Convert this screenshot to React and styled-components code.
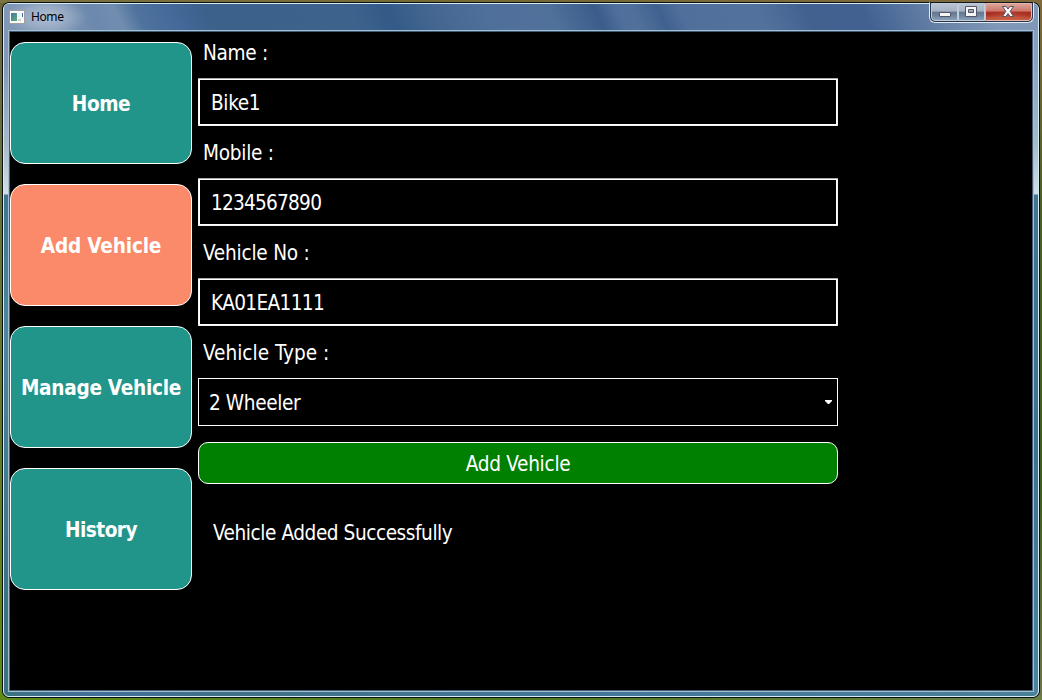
import React from 'react';
import styled, { createGlobalStyle } from 'styled-components';

const GlobalStyle = createGlobalStyle`
  *, *::before, *::after { box-sizing: border-box; }
  html, body { margin: 0; padding: 0; }
  body { overflow: hidden; font-family: "DejaVu Sans Condensed", "DejaVu Sans", sans-serif; font-stretch: condensed; }
  button, input { font: inherit; margin: 0; }
`;

const Desktop = styled.div`
  width: 1042px;
  height: 700px;
  padding: 2px;
  background:
    linear-gradient(90deg, #7c7340, #746a32 40%, #80693b) 0 0 / 100% 3px no-repeat,
    linear-gradient(180deg, #6d6439, #64733a 25%, #5f7b25 60%, #5d8b16) 0 0 / 3px 100% no-repeat,
    linear-gradient(90deg, #5d8b16, #4d7920 50%, #6b7f42) 0 100% / 100% 4px no-repeat,
    linear-gradient(180deg, #80693b, #4b5f24 30%, #3f5d1c 70%, #6f7548) 100% 0 / 4px 100% no-repeat,
    #4d6a22;
`;

const Window = styled.div`
  width: 1038px;
  height: 696px;
  border: 1px solid #0b1015;
  border-radius: 7px;
  background: #0b1015;
`;

const Glass = styled.div`
  height: 694px;
  display: flex;
  flex-direction: column;
  padding: 0 4px 4px;
  border: 1px solid #d5ebf3;
  border-radius: 6px;
  background:
    linear-gradient(180deg, #8095b4 0, #8298b8 60px, #a7bac9 140px, #d3dfe4 190px, #41758f 191px, #4c86a0 330px, #3b7182 600px, #3c7280 100%) 0 0 / 4px 100% no-repeat,
    linear-gradient(180deg, #8499b8 0, #8ba1bf 60px, #a7bac9 140px, #d3dfe4 190px, #41758f 191px, #3f718e 450px, #4d839d 100%) 100% 0 / 4px 100% no-repeat,
    linear-gradient(90deg, #3c7280, #426f9b 9%, #3e7186 22%, #43779a 60%, #4a7f98) 0 100% / 100% 4px no-repeat,
    #6384ac;
`;

const TitleBar = styled.header`
  height: 26px;
  flex: none;
  display: flex;
  align-items: flex-start;
  margin: 0 -4px;
  padding: 0 4px 0 5px;
  border-radius: 5px 5px 0 0;
  background:
    radial-gradient(ellipse 40px 20px at 43px 13px, #cbd6e2a0, #b7c5d670 55%, transparent),
    linear-gradient(65deg, #8197b8 0, #7e96b6 5%, #6c88ad 9%, #718daf 11.5%, #4f739d 13.5%, #44699a 17%, #3c618b 20%, #3c618b 24%, #3d628c 34%, #335a88 37.5%, #42658f 41%, #50709c 47%, #50719a 53%, #40608e 56.5%, #3b5d8b 57.5%, #516f9c 59.5%, #50709a 61%, #406190 63.5%, #516f9b 65.5%, #52729d 73%, #43618f 77.5%, #426192 83%, #6883a8 90%, #8197b8 95%, #8197b8 100%);
`;

const AppIcon = styled.svg`
  width: 16px;
  height: 14px;
  flex: none;
  margin-top: 6px;
`;

const WindowTitle = styled.span`
  margin: 5px 0 0 6px;
  color: #000;
  font-size: 12px;
  line-height: 16px;
  letter-spacing: -0.4px;
  font-family: "Noto Sans", sans-serif;
`;

const CaptionButtons = styled.div`
  display: flex;
  width: 105px;
  height: 21px;
  margin: -2px 0 0 auto;
  border: 1px solid #e1ebf2;
  border-top-color: #10161d;
  border-radius: 0 0 6px 6px;
  background: #27364b;
  padding: 0 1px 1px;
  overflow: hidden;
`;

const CaptionButton = styled.button`
  width: ${({ $width }) => $width}px;
  height: 18px;
  padding: 0;
  border: 1px solid ${({ $danger }) => ($danger ? '#eab5ab' : '#c0ccda')};
  border-radius: ${({ $corner }) => $corner || '0'};
  display: flex;
  align-items: center;
  justify-content: center;
  background: ${({ $danger }) =>
    $danger
      ? 'radial-gradient(ellipse 26px 9px at 50% 100%, #cc5b3e, transparent), linear-gradient(180deg, #dba398, #cc7568 45%, #a92d20 50%, #a83225 70%, #be6653)'
      : 'linear-gradient(180deg, #b9c4d1, #a5b2c3 45%, #64788f 50%, #6c819d 70%, #8ca0ba)'};
`;

const Client = styled.main`
  flex: 1;
  display: flex;
  gap: 6px;
  border: 1px solid #405c78;
  box-shadow: 0 0 0 1px #a6c1ce;
  margin: 1px;
  background: #000;
  color: #fff;
`;

const Sidebar = styled.nav`
  width: 182px;
  padding-top: 10px;
  display: flex;
  flex-direction: column;
  gap: 20px;
`;

const NavButton = styled.button`
  width: 182px;
  height: 122px;
  padding: 2px 0 0;
  border: 1px solid #fff;
  border-radius: 15px;
  background: ${({ $active }) => ($active ? '#fa8a69' : '#22958b')};
  color: #fff;
  font-size: 20.6px;
  font-weight: 700;
  letter-spacing: ${({ $spacing }) => $spacing}px;
  white-space: nowrap;
`;

const Form = styled.form`
  width: 640px;
  display: flex;
  flex-direction: column;
  font-size: 20.6px;
`;

const Label = styled.label`
  height: ${({ $first }) => ($first ? 46 : 52)}px;
  padding: ${({ $first }) => ($first ? 8 : 14)}px 0 0 5px;
  line-height: 26px;
  letter-spacing: ${({ $spacing }) => $spacing}px;
  white-space: nowrap;
`;

const TextInput = styled.input`
  width: 640px;
  height: 48px;
  padding: 2px 12px 0;
  border: 1px solid #f2f2f2;
  border-top-color: #a9abb0;
  border-radius: 1px;
  box-shadow: inset 0 0 0 1px #fff;
  outline: 0;
  background: #000;
  color: #fff;
  letter-spacing: ${({ $spacing }) => $spacing}px;
`;

const SelectBox = styled.div`
  height: 48px;
  display: flex;
  align-items: center;
  justify-content: space-between;
  padding: 0 5px 0 10px;
  border: 1px solid #fff;
  letter-spacing: ${({ $spacing }) => $spacing}px;
`;

const SelectValue = styled.span`
  padding-top: 2px;
`;

const SubmitButton = styled.button`
  height: 42px;
  margin-top: 16px;
  padding: 2px 0 0;
  border: 1px solid #fff;
  border-radius: 10px;
  background: #008000;
  color: #fff;
  letter-spacing: ${({ $spacing }) => $spacing}px;
`;

const Status = styled.p`
  margin: 36px 0 0 15px;
  line-height: 26px;
  letter-spacing: ${({ $spacing }) => $spacing}px;
  white-space: nowrap;
`;

const pages = [
  { name: 'Home', spacing: -0.45 },
  { name: 'Add Vehicle', spacing: -0.19, active: true },
  { name: 'Manage Vehicle', spacing: -0.28 },
  { name: 'History', spacing: -0.5 },
];

const fields = [
  { label: 'Name :', value: 'Bike1', labelSpacing: -0.32, valueSpacing: -0.35 },
  { label: 'Mobile :', value: '1234567890', labelSpacing: -0.26, valueSpacing: -0.77 },
  { label: 'Vehicle No :', value: 'KA01EA1111', labelSpacing: -0.23, valueSpacing: -0.65 },
];

export default function App() {
  return (
    <>
      <GlobalStyle />
      <Desktop>
        <Window>
          <Glass>
            <TitleBar>
              <AppIcon viewBox="0 0 16 14" shapeRendering="crispEdges">
                <defs>
                  <linearGradient id="screen" x1="0" y1="0" x2="1" y2="1">
                    <stop offset="0" stopColor="#4b78a4" />
                    <stop offset="1" stopColor="#58ad78" />
                  </linearGradient>
                </defs>
                <path d="M0 0h16v14H0z" fill="#a1a09d" />
                <path d="M1 1h14v12H1z" fill="#fbfbfb" />
                <path d="M2 3h6v8H2z" fill="url(#screen)" />
                <path d="M9 3h3v5H9z" fill="#eef2f5" />
                <path d="M13 3h1v4h-1z" fill="#406ca5" />
                <path d="M9 9h3v2H9z" fill="#cccfd3" />
              </AppIcon>
              <WindowTitle>Home</WindowTitle>
              <CaptionButtons>
                <CaptionButton $width={28} $corner="0 0 0 4px" aria-label="Minimize">
                  <svg width="14" height="12" viewBox="0 0 14 12">
                    <rect x="1.5" y="6.5" width="11" height="4" rx=".5" fill="#f5f5f5" stroke="#535666" />
                  </svg>
                </CaptionButton>
                <CaptionButton $width={27} aria-label="Maximize">
                  <svg width="13" height="12" viewBox="0 0 13 12">
                    <path fillRule="evenodd" d="M.5.5h11v10H.5zM3.5 3.5v3h5v-3z" fill="#f5f5f5" stroke="#535666" />
                  </svg>
                </CaptionButton>
                <CaptionButton $width={48} $danger $corner="0 0 4px 0" aria-label="Close">
                  <svg width="14" height="12" viewBox="0 0 14 12">
                    <path d="M1.5.5h3.4L7 3 9.1.5h3.4L9.2 5.3l3.3 5.2H9.1L7 7.6l-2.1 2.9H1.5l3.3-5.2z" fill="#f7f7f7" stroke="#535666" />
                  </svg>
                </CaptionButton>
              </CaptionButtons>
            </TitleBar>
            <Client>
              <Sidebar>
                {pages.map((p) => (
                  <NavButton key={p.name} $active={p.active} $spacing={p.spacing}>{p.name}</NavButton>
                ))}
              </Sidebar>
              <Form onSubmit={(e) => e.preventDefault()}>
                {fields.map((f, i) => (
                  <React.Fragment key={f.label}>
                    <Label $first={i === 0} $spacing={f.labelSpacing} htmlFor={`field-${i}`}>{f.label}</Label>
                    <TextInput id={`field-${i}`} defaultValue={f.value} $spacing={f.valueSpacing} />
                  </React.Fragment>
                ))}
                <Label $spacing={0}>Vehicle Type :</Label>
                <SelectBox $spacing={-0.4}>
                  <SelectValue>2 Wheeler</SelectValue>
                  <svg width="7" height="4" viewBox="0 0 7 4"><path d="M0 0h7v1L4 4H3L0 1z" fill="#fff" /></svg>
                </SelectBox>
                <SubmitButton $spacing={-0.28}>Add Vehicle</SubmitButton>
                <Status $spacing={-0.45}>Vehicle Added Successfully</Status>
              </Form>
            </Client>
          </Glass>
        </Window>
      </Desktop>
    </>
  );
}
